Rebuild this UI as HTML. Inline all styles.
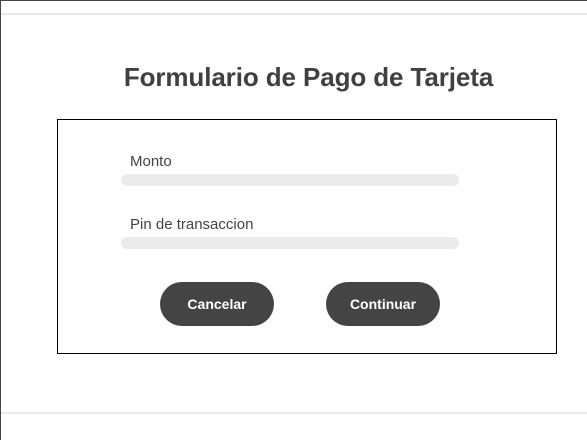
<!DOCTYPE html>
<html><head><style>
*{margin:0;padding:0;box-sizing:border-box}
body{width:587px;height:434px;background:#fff;position:relative;overflow:hidden;font-family:"Liberation Sans",sans-serif;color:#444}
.frame{position:absolute;left:0;top:0;width:600px;height:440px;border-top:1px solid #444;border-left:1px solid #444}
.hl{position:absolute;left:1px;right:0;height:2px;background:#e8e8e8}
h1{position:absolute;left:0;width:617px;top:62px;text-align:center;font-size:26px;font-weight:bold;color:#404040;letter-spacing:-0.1px}
.box{position:absolute;left:57px;top:119px;width:500px;height:235px;border:1px solid #000}
.lbl{position:absolute;left:130px;font-size:15px;color:#444}
.inp{position:absolute;left:121px;width:338px;height:12px;border-radius:6px;background:#ebebeb}
.btn{position:absolute;top:282px;width:114px;height:44px;border-radius:22px;background:#444;color:#fff;font-weight:bold;font-size:14px;line-height:44px;text-align:center}
</style></head><body>
<div class="frame"></div>
<div class="hl" style="top:13px"></div>
<div class="hl" style="top:412px"></div>
<h1>Formulario de Pago de Tarjeta</h1>
<div class="box"></div>
<div class="lbl" style="top:153px">Monto</div>
<div class="inp" style="top:174px"></div>
<div class="lbl" style="top:216px">Pin de transaccion</div>
<div class="inp" style="top:237px"></div>
<div class="btn" style="left:160px">Cancelar</div>
<div class="btn" style="left:326px">Continuar</div>
</body></html>
